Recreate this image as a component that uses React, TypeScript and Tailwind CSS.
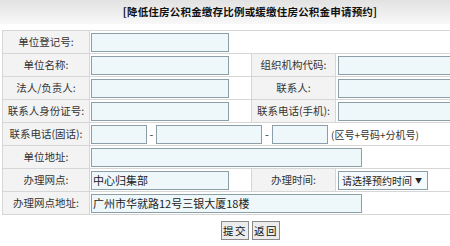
import React from "react";

const font = "font-['Noto_Sans_CJK_SC','Noto_Sans',sans-serif]";

function Field({ w, value = "" }: { w: string; value?: string }) {
  return (
    <div
      className={`${w} h-[19px] border border-[#8c9ea6] bg-[#eef8fb] text-[11px] leading-[17px] pl-[1px] text-[#222] whitespace-nowrap overflow-hidden`}
    >
      {value}
    </div>
  );
}

const lab = "border border-[#d6d6d6] bg-[#f3f3f3] text-center text-[10.5px] text-[#333] h-[23px] p-0 whitespace-nowrap";
const val = "border border-[#d6d6d6] bg-white h-[23px] py-0 pl-[1px] pr-0";
const valR = "border border-[#d6d6d6] bg-white h-[23px] py-0 pl-[2px] pr-0";
const btn = "w-[28px] h-[19px] border border-[#8a8a8a] bg-[#ececec] text-[10.5px] leading-[17px] text-[#111] tracking-[1.5px] p-0 pl-[1px] whitespace-nowrap overflow-hidden";

export default function App() {
  return (
    <div className={`w-[450px] h-[246px] overflow-hidden bg-white ${font}`}>
      <div className="h-[24px] bg-gradient-to-b from-[#e2e2e2] to-[#f8f8f8] flex items-center justify-center pl-[50px] text-[10.5px] font-bold text-[#111] tracking-[0.2px]">
        [降低住房公积金缴存比例或缓缴住房公积金申请预约]
      </div>
      <div className="h-[6px]" />
      <table className="ml-[2px] border-collapse table-fixed w-[470px]">
        <colgroup>
          <col className="w-[87px]" />
          <col className="w-[162px]" />
          <col className="w-[84px]" />
          <col />
        </colgroup>
        <tbody>
          <tr>
            <td className={lab}>单位登记号:</td>
            <td className={val} colSpan={3}>
              <Field w="w-[138px]" />
            </td>
          </tr>
          <tr>
            <td className={lab}>单位名称:</td>
            <td className={val}>
              <Field w="w-[138px]" />
            </td>
            <td className={lab}>组织机构代码:</td>
            <td className={valR}>
              <Field w="w-[140px]" />
            </td>
          </tr>
          <tr>
            <td className={lab}>法人/负责人:</td>
            <td className={val}>
              <Field w="w-[138px]" />
            </td>
            <td className={lab}>联系人:</td>
            <td className={valR}>
              <Field w="w-[140px]" />
            </td>
          </tr>
          <tr>
            <td className={lab}>联系人身份证号:</td>
            <td className={val}>
              <Field w="w-[138px]" />
            </td>
            <td className={lab}>联系电话(手机):</td>
            <td className={valR}>
              <Field w="w-[140px]" />
            </td>
          </tr>
          <tr>
            <td className={lab}>联系电话(固话):</td>
            <td className={val} colSpan={3}>
              <div className="flex items-center text-[11px] text-[#333] whitespace-nowrap">
                <Field w="w-[56px]" />
                <span className="w-[9px] text-center">-</span>
                <Field w="w-[106px]" />
                <span className="w-[10px] text-center">-</span>
                <Field w="w-[56px]" />
                <span className="ml-[3px] text-[10px]">(区号+号码+分机号)</span>
              </div>
            </td>
          </tr>
          <tr>
            <td className={lab}>单位地址:</td>
            <td className={val} colSpan={3}>
              <Field w="w-[271px]" />
            </td>
          </tr>
          <tr>
            <td className={lab}>办理网点:</td>
            <td className={val}>
              <Field w="w-[138px]" value="中心归集部" />
            </td>
            <td className={lab}>办理时间:</td>
            <td className={valR}>
              <div className="w-[90px] h-[19px] border border-[#8c9ea6] bg-[#f4f9fb] flex items-center justify-between pl-[3px] pr-[5px] text-[10px] text-[#222] whitespace-nowrap overflow-hidden">
                <span>请选择预约时间</span>
                <span className="text-[7px]">▼</span>
              </div>
            </td>
          </tr>
          <tr>
            <td className={lab}>办理网点地址:</td>
            <td className={val} colSpan={3}>
              <Field w="w-[271px]" value="广州市华就路12号三银大厦18楼" />
            </td>
          </tr>
        </tbody>
      </table>
      <div className="flex justify-center gap-[3px] mt-[6px] pl-[50px]">
        <button className={btn}>提交</button>
        <button className={btn}>返回</button>
      </div>
    </div>
  );
}
